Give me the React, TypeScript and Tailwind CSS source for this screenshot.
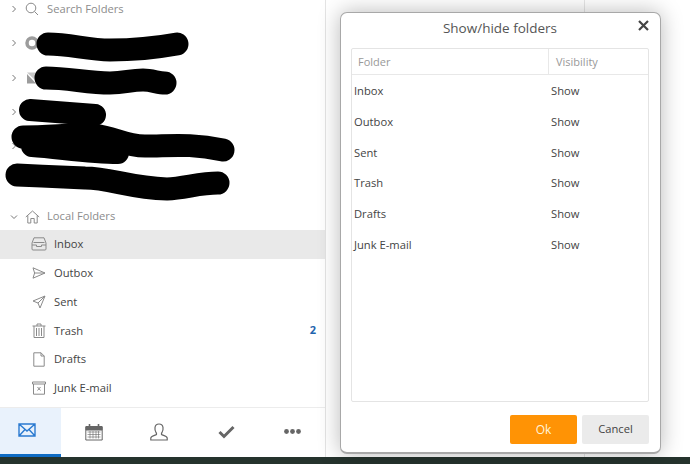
const I = "fill-none stroke-[#8a8a8a]";

function Chevron({ down = false }: { down?: boolean }) {
  return (
    <svg width="8" height="8" viewBox="0 0 8 8" className="fill-none stroke-[#777] shrink-0">
      {down ? <path d="M1 2.5 L4 5.5 L7 2.5" /> : <path d="M2.5 1 L5.5 4 L2.5 7" />}
    </svg>
  );
}

const icons: Record<string, JSX.Element> = {
  inbox: (
    <svg width="16" height="14" viewBox="0 0 16 14" className={I}>
      <path d="M3 .8 H13 L15 6 V12 Q15 13 14 13 H2 Q1 13 1 12 V6 Z" />
      <path d="M1 8 H5.5 V9.5 H10.5 V8 H15" />
      <path d="M2.5 5.5 H13.5" />
    </svg>
  ),
  outbox: (
    <svg width="14" height="12" viewBox="0 0 14 12" className={I}>
      <path d="M1 .8 L13 6 L1 11.2 L2.6 6 Z M2.6 6 H13" />
    </svg>
  ),
  sent: (
    <svg width="14" height="14" viewBox="0 0 14 14" className={I}>
      <path d="M13 1 L1 6 L6 8 L8 13 Z M6 8 L13 1" />
    </svg>
  ),
  trash: (
    <svg width="14" height="15" viewBox="0 0 14 15" className={I}>
      <path d="M.5 3 H13.5 M5 3 V1 H9 V3 M2 3 V14.5 H12 V3 M4.5 5 V13 M7 5 V13 M9.5 5 V13" />
    </svg>
  ),
  drafts: (
    <svg width="12" height="15" viewBox="0 0 12 15" className={I}>
      <path d="M.8 .8 H8 L11.2 4 V14.2 H.8 Z M8 .8 V4 H11.2" />
    </svg>
  ),
  junk: (
    <svg width="14" height="14" viewBox="0 0 14 14" className={I}>
      <path d="M.5 1 H13.5 V3 H.5 Z M1.5 3 V13.2 H12.5 V3 M5.5 6 L8.5 9.5 M8.5 6 L5.5 9.5" />
    </svg>
  ),
};

const folders = [
  { name: "Inbox", icon: "inbox", active: true },
  { name: "Outbox", icon: "outbox" },
  { name: "Sent", icon: "sent" },
  { name: "Trash", icon: "trash", count: "2" },
  { name: "Drafts", icon: "drafts" },
  { name: "Junk E-mail", icon: "junk" },
];

function Scribbles() {
  return (
    <svg width="240" height="205" viewBox="0 0 240 205" className="absolute left-0 top-0 fill-none stroke-black" strokeLinecap="round" strokeLinejoin="round">
      <path strokeWidth="23" d="M48 44 C70 44 88 50 110 50 C135 50 155 48 177 44" />
      <path strokeWidth="23" d="M46 78 C68 78 88 83 110 83 C125 83 130 80 143 80 C152 80 158 83 165 83" />
      <path strokeWidth="22" d="M30 110 L95 115" />
      <path strokeWidth="23" d="M23 137 C50 137 75 134 95 135 C115 138 125 146 145 146 C170 146 190 143 223 150" />
      <path strokeWidth="22" d="M32 146 C60 148 90 153 118 153" />
      <path strokeWidth="23" d="M17 175 C40 176 60 177 85 178 C110 178 130 188 167 189 C185 188 200 183 218 183" />
    </svg>
  );
}

const rows = ["Inbox", "Outbox", "Sent", "Trash", "Drafts", "Junk E-mail"];

export default function App() {
  return (
    <div className="relative w-[690px] h-[464px] overflow-hidden flex flex-col bg-white text-[#333] font-['Open_Sans','Noto_Sans',sans-serif]">
      <div className="flex-1 flex min-h-0">
        <aside className="w-[326px] border-r border-[#e4e4e4] flex flex-col">
          <div className="flex items-center h-[17px] pl-[10px] gap-[7px] text-[11.2px] text-[#8c8c8c]">
            <Chevron />
            <svg width="14" height="14" viewBox="0 0 14 14" className={I}>
              <circle cx="6" cy="6" r="4.8" />
              <path d="M9.5 9.5 L13 13" />
            </svg>
            <span className="ml-[1px] pt-[2px]">Search Folders</span>
          </div>
          <div className="h-[186px] flex flex-col pl-[10px]">
            {[
              <svg key="a" width="14" height="14" viewBox="0 0 14 14" className="fill-none stroke-[#9c9c9c]"><circle cx="7" cy="7" r="5" strokeWidth="3.5" /></svg>,
              <svg key="b" width="14" height="14" viewBox="0 0 14 14"><path d="M2 1.5 H12 L12 11 Z" fill="#c8c8c8" /><path d="M2 3 L11 12.5 H2 Z" fill="#9c9c9c" /></svg>,
              null,
              null,
            ].map((ic, i) => (
              <div key={i} className="h-[34.4px] flex items-center gap-[7px] first:mt-[9px]">
                <Chevron />
                {ic}
              </div>
            ))}
          </div>
          <div className="flex items-center h-[27px] pl-[10px] gap-[7px] text-[11.2px] text-[#8c8c8c]">
            <Chevron down />
            <svg width="15" height="14" viewBox="0 0 15 14" className={I}>
              <path d="M.8 7 L7.5 1 L14.2 7 M2.8 5.5 V13 H5.8 V8.5 H9.2 V13 H12.2 V5.5" />
            </svg>
            <span>Local Folders</span>
          </div>
          <ul className="flex-1 flex flex-col">
            {folders.map((f) => (
              <li
                key={f.name}
                className={`h-[28.7px] flex items-center pl-[31px] pr-[9px] text-[11.2px] text-[#444] ${f.active ? "bg-[#e9e9e9]" : ""}`}
              >
                <span className="w-[16px] flex justify-center">{icons[f.icon]}</span>
                <span className="ml-[7px] pt-[1px]">{f.name}</span>
                {f.count && <span className="ml-auto text-[#1f64ad] font-bold text-[11px]">{f.count}</span>}
              </li>
            ))}
          </ul>
          <nav className="h-[50px] border-t border-[#ececec] flex">
            <div className="w-[61px] bg-[#e9f2fc] border-b-[3px] border-[#0f6cc4] flex items-center justify-center pb-[2px] pr-[7px]">
              <svg width="18" height="14" viewBox="0 0 18 14" className="fill-none stroke-[#2a7ad0]" strokeWidth="1.4">
                <path d="M1 1 H17 V13 H1 Z M1 1 L9 8 L17 1 M1 13 L7 6.5 M17 13 L11 6.5" />
              </svg>
            </div>
            <div className="flex-1 flex justify-between items-center pb-[2px] pl-[24px] pr-[24px]">
              <svg width="18" height="18" viewBox="0 0 18 18" className="fill-none stroke-[#666]">
                <path d="M.8 3.5 H17.2 V17 H.8 Z" />
                <path d="M1 4 H17 V7 H1 Z" fill="#666" />
                <path d="M4.5 1 V5 M13.5 1 V5" strokeWidth="1.6" />
                <path d="M2.5 9 H15.5 M2.5 11.5 H15.5 M2.5 14 H15.5 M5 8 V15.5 M8 8 V15.5 M11 8 V15.5 M13.5 8 V15.5" strokeWidth=".6" />
              </svg>
              <svg width="18" height="18" viewBox="0 0 18 18" className="fill-none stroke-[#666] -ml-[2px]" strokeWidth="1.2">
                <path d="M.8 17 V15 C1 13 5 12.5 6.5 11.5 C6.7 10.5 6.5 10 6 9.5 C5 8 4.8 6 5 4.5 C5.3 2 7 1 9 1 C11 1 12.7 2 13 4.5 C13.2 6 13 8 12 9.5 C11.5 10 11.3 10.5 11.5 11.5 C13 12.5 17 13 17.2 15 V17 Z" />
              </svg>
              <svg width="17" height="14" viewBox="0 0 17 14" className="fill-none stroke-[#666]" strokeWidth="3">
                <path d="M1.5 7 L6 11.5 L15.5 2" />
              </svg>
              <svg width="17" height="5" viewBox="0 0 17 5" className="fill-[#666]">
                <circle cx="2.5" cy="2.5" r="2.4" />
                <circle cx="8.5" cy="2.5" r="2.4" />
                <circle cx="14.5" cy="2.5" r="2.4" />
              </svg>
            </div>
          </nav>
        </aside>
        <main className="flex-1 flex">
          <div className="w-[259px] border-r border-[#e6e6e6]" />
        </main>
      </div>
      <footer className="h-[7px] bg-[#25332d] shrink-0" />

      <Scribbles />

      <section className="absolute left-[340px] top-[12px] w-[321px] h-[442px] bg-white rounded-[7px] border border-[#a8a8a8] border-b-2 shadow-[0_0_22px_rgba(0,0,0,0.28)] flex flex-col pl-[10px] pr-[11px]">
        <header className="relative h-[35px] pb-[4px] flex items-center justify-center text-[13.5px] text-[#555]">
          Show/hide folders
          <svg width="11" height="11" viewBox="0 0 11 11" className="absolute right-[0px] top-[7px] fill-none stroke-[#444]" strokeWidth="2.2">
            <path d="M1 1 L10 10 M10 1 L1 10" />
          </svg>
        </header>
        <div className="flex-1 border border-[#e4e4e4] rounded-[2px] flex flex-col">
          <div className="h-[26px] border-b border-[#e8e8e8] flex text-[11px] text-[#999] items-stretch">
            <div className="w-[197px] border-r border-[#e8e8e8] pl-[6px] pt-[1px] flex items-center">Folder</div>
            <div className="pl-[7px] pt-[1px] flex items-center">Visibility</div>
          </div>
          {rows.map((r) => (
            <div key={r} className="h-[30.8px] flex items-center text-[11.2px] text-[#444] pt-[2px]">
              <div className="w-[199px] pl-[2px]">{r}</div>
              <div>Show</div>
            </div>
          ))}
        </div>
        <div className="h-[50px] pt-[13px] flex justify-end gap-[5px]">
          <button className="w-[67px] h-[29px] rounded-[2px] bg-[#ff9305] text-[#fff3dc] text-[12px]">Ok</button>
          <button className="w-[67px] h-[29px] rounded-[2px] bg-[#ebebeb] text-[#444] text-[11.2px]">Cancel</button>
        </div>
      </section>
    </div>
  );
}
